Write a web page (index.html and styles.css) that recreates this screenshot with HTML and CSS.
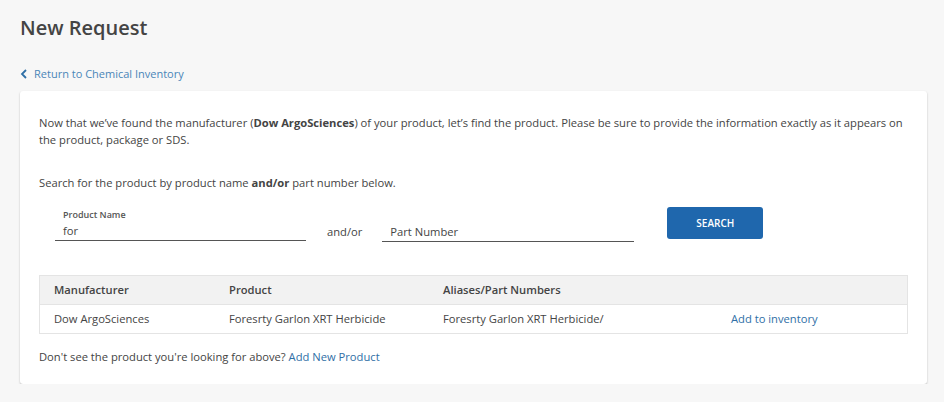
FILE: index.html
```html
<!DOCTYPE html>
<html lang="en">
<head>
    <meta charset="UTF-8">
    <title>New Request</title>
    <link rel="stylesheet" href="styles.css">
</head>
<body>
    <h1 class="title">New Request</h1>

    <a class="back-link" href="#">
        <svg width="8" height="10" viewBox="0 0 8 10"><path d="M6 1 L2 5 L6 9" fill="none" stroke="#2f6fa6" stroke-width="1.8"/></svg>
        Return to Chemical Inventory
    </a>

    <div class="card">
        <p class="intro">Now that we’ve found the manufacturer (<b>Dow ArgoSciences</b>) of your product, let’s find the product. Please be sure to provide the information exactly as it appears on the product, package or SDS.</p>

        <p class="hint">Search for the product by product name <b>and/or</b> part number below.</p>

        <div class="search-row">
            <div class="field name-field">
                <label>Product Name</label>
                <div class="value">for</div>
            </div>
            <span class="andor">and/or</span>
            <div class="field part-field">
                <div class="placeholder">Part Number</div>
            </div>
            <button class="search-btn">SEARCH</button>
        </div>

        <table class="results">
            <thead>
                <tr>
                    <th class="col-man">Manufacturer</th>
                    <th class="col-prod">Product</th>
                    <th class="col-alias">Aliases/Part Numbers</th>
                    <th></th>
                </tr>
            </thead>
            <tbody>
                <tr>
                    <td>Dow ArgoSciences</td>
                    <td>Foresrty Garlon XRT Herbicide</td>
                    <td>Foresrty Garlon XRT Herbicide/</td>
                    <td><a href="#">Add to inventory</a></td>
                </tr>
            </tbody>
        </table>

        <p class="footer-note">Don't see the product you're looking for above? <a href="#">Add New Product</a></p>
    </div>
</body>
</html>
```

FILE: styles.css
```css
body {
    margin: 0;
    padding: 0 17px 0 20px;
    background: #f7f7f7;
    font-family: 'Open Sans', sans-serif;
    color: #444;
    font-size: 11.2px;
}

a {
    color: #2f6fa6;
    text-decoration: none;
}

.title {
    margin: 0;
    padding-top: 14px;
    font-size: 20px;
    font-weight: 600;
    color: #444;
    line-height: 27px;
}

.back-link {
    display: flex;
    align-items: center;
    gap: 6px;
    margin-top: 25px;
    font-size: 11px;
    line-height: 16px;
    color: #4a86b8;
}

.card {
    margin-top: 9px;
    background: white;
    border-radius: 3px;
    box-shadow: 0 1px 2px rgba(0, 0, 0, 0.25);
    padding: 23px 19px 19px 19px;
}

.intro {
    margin: 0;
    line-height: 17px;
}

.hint {
    margin: 26px 0 0 0;
    line-height: 17px;
}

.search-row {
    display: flex;
    align-items: flex-end;
    margin: 16px 0 0 16px;
}

.field {
    border-bottom: 1px solid #555;
    padding: 0 0 1px 8px;
}

.name-field {
    width: 243px;
}

.field label {
    display: block;
    font-size: 9px;
    font-weight: 600;
    line-height: 16px;
    color: #555;
}

.field .value,
.field .placeholder {
    font-size: 11.2px;
    line-height: 16px;
}

.andor {
    margin: 0 20px 0 21px;
    line-height: 16px;
    padding-bottom: 1px;
}

.part-field {
    width: 244px;
    margin-bottom: -1px;
}

.search-btn {
    margin-left: 33px;
    margin-bottom: 1px;
    align-self: flex-start;
    width: 96px;
    height: 32px;
    background: #1f67ad;
    color: white;
    border: none;
    border-radius: 3px;
    font-family: 'Open Sans', sans-serif;
    font-size: 10px;
    font-weight: 600;
}

.results {
    width: 100%;
    margin-top: 34px;
    border-collapse: collapse;
    border: 1px solid #e4e4e4;
}

.results th,
.results td {
    text-align: left;
    padding: 6px 14px;
    height: 16px;
    line-height: 16px;
    font-size: 11.2px;
}

.results th {
    background: #f2f2f2;
    font-weight: 600;
    border-bottom: 1px solid #e4e4e4;
}

.col-man { width: 147px; }
.col-prod { width: 186px; }
.col-alias { width: 260px; }

.footer-note {
    margin: 15px 0 0 0;
    line-height: 16px;
}
```
